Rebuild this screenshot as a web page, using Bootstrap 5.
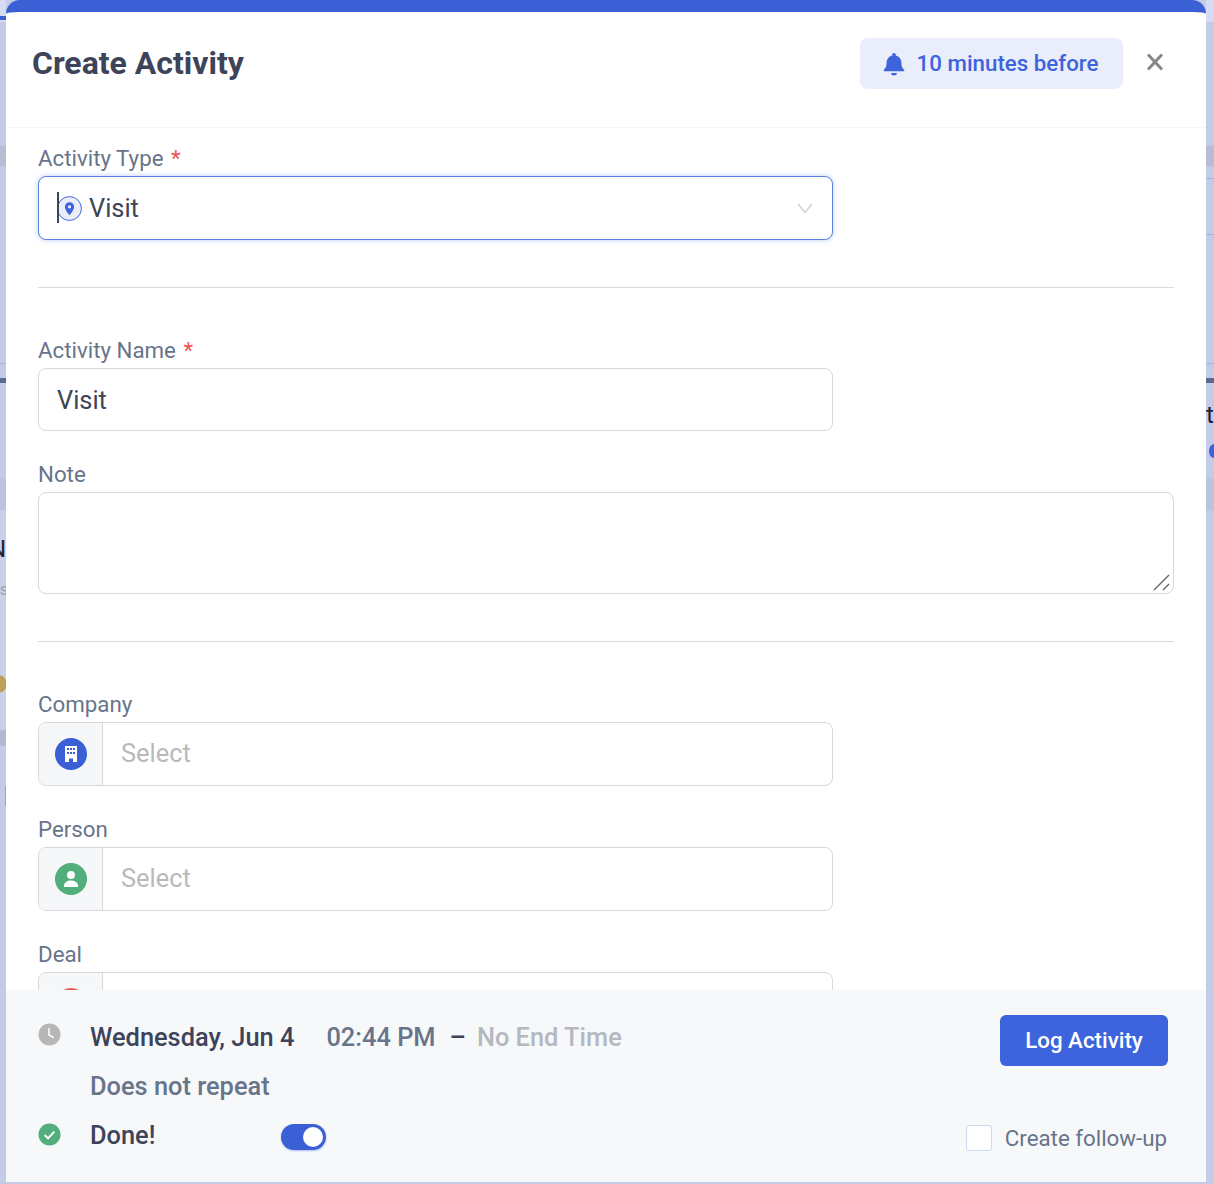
<!doctype html>
<html lang="en"><head><meta charset="utf-8"><title>Create Activity</title>
<link href="https://cdn.jsdelivr.net/npm/bootstrap@5.3.0/dist/css/bootstrap.min.css" rel="stylesheet">
<style>
html,body{height:1184px;overflow:hidden}
body{background:#c4cbe6;font-family:Roboto,sans-serif;color:#3d4459;position:relative}
.strip{position:absolute;left:0;width:6px}
.strip-r{left:1206px;width:8px}
.strip-head{top:0;height:22px;background:#d5dbf3}
.strip-rule{top:16px;height:4px;background:#3b60d6}
.strip-band{top:146px;height:20px;background:#b7bdd3}
.strip-line{top:363px;height:1px;background:#a9b3d3}
.strip-bar{top:378px;height:5px;background:#5d6b90}
.strip-shade{top:478px;height:32px;background:#bcc3dd}
.strip-pale{top:510px;height:220px;background:#c9d0e8}
.strip-low{top:730px;height:16px;background:#b3b9d0}
.strip-tick{top:786px;left:5px;width:1px;height:20px;background:#8fa3e2}
.strip-r1{top:178px;height:1px;background:#a9b3d3}
.strip-r2{top:234px;height:1px;background:#a9b3d3}
.strip-dot{position:absolute;left:-11px;top:675px;width:18px;height:18px;border-radius:50%;background:#bf9f58}
.strip-pin{position:absolute;left:1209px;top:444px;width:10px;height:14px;border-radius:50%;background:#3d63dd}
.strip-txt{position:absolute;font-size:24px;line-height:28px;color:#1d2333}
.strip-n{left:-11px;top:535px}
.strip-t{left:1206px;top:401px}
.strip-us{position:absolute;left:-9px;top:580px;font-size:16px;line-height:20px;color:#99a0b5}
.sheet{position:relative;margin-left:6px;width:1200px;height:1182px;background:#fff;border-top:12px solid #3b60d6;border-radius:14px 14px 0 0;display:flex;flex-direction:column;overflow:hidden}
.sheet-head{height:116px;flex:none;padding:26px 39px 0 26px;border-bottom:1px solid #f3f4f6}
.sheet-title{font-family:Roboto,sans-serif;font-weight:700;font-size:32px;line-height:50px;margin:0;color:#3d4459}
.remind{width:263px;height:51px;padding-right:2px;background:#e9eefa;border-radius:8px;color:#3d63dd;font-size:22.3px;font-weight:500;gap:12px}
.x-btn{width:24px;height:24px;margin:11px 0 0 20px;padding:0;background:none;border:0;color:#878787}
.sheet-body{flex:1;min-height:0;overflow:hidden;padding:16px 32px 0}
.lbl{font-size:22.3px;line-height:29px;color:#67748a;margin:0 0 3px;display:block}
.req{color:#ef5350;margin-left:2px}
.fld{width:795px;height:63px;border:1px solid #d6d8db;border-radius:8px;background:#fff;font-size:25.4px;color:#3d4459;padding:2px 18px 0}
.fld-on{height:64px;border-color:#5d7fe3;box-shadow:0 0 5px rgba(61,99,221,.35);position:relative;gap:7px;padding-top:0}
.caret-mark{position:absolute;left:18px;top:15px;width:2px;height:31px;background:#3d4459}
.note-box{height:102px;width:100%;border:1px solid #d6d8db;border-radius:8px;position:relative;margin-bottom:47px}
.grip{position:absolute;right:2px;bottom:2px}
.sep{border-top:1px solid #d9dbdf;margin:0;opacity:1}
.sep-gap{margin-bottom:48px}
.grp{width:795px;height:64px;border:1px solid #d6d8db;border-radius:8px;overflow:hidden;margin-bottom:29px}
.grp-ic{width:64px;flex:none;background:#f6f7f9;border-right:1px solid #d6d8db}
.grp-ph{font-size:25.4px;color:#b9b9b9;padding:0 0 2px 18px}
.sheet-foot{flex:none;height:192px;background:#f7f8fa;padding:25px 38px 0 32px;position:relative}
.foot-ic{width:23px;flex:none}
.clock-ic{margin:-6px 29px 0 0}
.date-main{font-size:25.4px;font-weight:500;color:#3d4459;line-height:44px}
.date-time{font-size:25.4px;font-weight:500;color:#67748a;margin-left:32px}
.date-dash{font-size:25.4px;font-weight:500;margin:0 11px 0 14px}
.date-none{font-size:25.4px;font-weight:500;color:#b4b8bf}
.repeat{font-size:25.4px;font-weight:500;color:#67748a;margin:2px 0 0 52px;line-height:36px}
.done-row{margin-top:14px}
.done{font-size:25.4px;font-weight:500;margin:-3px 0 0 29px;width:191px;color:#3d4459;line-height:36px}
.tog{width:45px;height:26px;border-radius:13px;background:#3b60d6;position:relative;box-shadow:0 1px 2px rgba(61,99,221,.4)}
.tog-dot{position:absolute;right:3px;top:3px;width:20px;height:20px;border-radius:50%;background:#fff}
.log-btn{width:168px;height:51px;background:#3d63dd;color:#fff;font-size:22.3px;font-weight:500;border:0;border-radius:6px;padding:0}
.chk-side{margin:2px 1px 0 0}
.chk{width:26px;height:26px;background:#fff;border:1px solid #ccd8f4;border-radius:3px}
.fu{font-size:22.3px;color:#67748a;margin-left:13px;padding-top:2px}
</style></head><body>
<div class="strip strip-head"></div><div class="strip strip-r strip-head"></div>
<div class="strip strip-rule"></div>
<div class="strip strip-band"></div><div class="strip strip-r strip-band"></div>
<div class="strip strip-r strip-r1"></div><div class="strip strip-r strip-r2"></div>
<div class="strip strip-line"></div><div class="strip strip-r strip-line"></div>
<div class="strip strip-bar"></div><div class="strip strip-r strip-bar"></div>
<div class="strip strip-shade"></div><div class="strip strip-r strip-shade"></div>
<div class="strip strip-pale"></div>
<div class="strip strip-low"></div>
<div class="strip strip-tick"></div>
<div class="strip-dot"></div><div class="strip-pin"></div>
<div class="strip-txt strip-n">N</div>
<div class="strip-txt strip-t">t</div>
<div class="strip-us">us</div>
<main class="sheet">
 <header class="sheet-head d-flex align-items-start justify-content-between">
  <h1 class="sheet-title">Create Activity</h1>
  <div class="d-flex align-items-start">
   <div class="remind d-flex align-items-center justify-content-center">
    <svg width="22" height="24" viewBox="0 0 22 24" fill="#3d63dd"><path d="M11 1a1.800 1.800 0 0 1 1.800 1.800v.6c3.600.8 5.600 3.800 5.600 7.400 0 3.600.9 5.200 2.800 7.200v1.200H.8V18c1.900-2 2.800-3.600 2.800-7.200 0-3.600 2-6.600 5.600-7.400v-.6A1.800 1.800 0 0 1 11 1zM8 21h6c0 1.300-1.300 2.400-3 2.400S8 22.300 8 21z"/></svg>
    <span>10 minutes before</span>
   </div>
   <button class="x-btn" type="button" aria-label="Close"><svg width="24" height="24" viewBox="0 0 24 24" fill="none" stroke="currentColor" stroke-width="3"><path d="M5 4.500 19 19.500M19 4.500 5 19.500"/></svg></button>
  </div>
 </header>
 <section class="sheet-body">
  <label class="lbl">Activity Type <span class="req">*</span></label>
  <div class="fld fld-on d-flex align-items-center" style="margin-bottom:47px">
   <i class="caret-mark"></i>
   <svg width="25" height="25" viewBox="0 0 26 26"><circle cx="13" cy="13" r="12.400" fill="#e9eefa" stroke="#3d63dd"/><path d="M13 6.500a4.800 4.800 0 0 0-4.800 4.800C8.200 15 13 20 13 20s4.800-5 4.800-8.700A4.800 4.800 0 0 0 13 6.500zm0 6.500a1.700 1.700 0 1 1 0-3.400 1.700 1.700 0 0 1 0 3.400z" fill="#3d63dd"/></svg>
   <span>Visit</span>
   <svg class="ms-auto" width="18" height="11" viewBox="0 0 18 11" fill="none" stroke="#cfcfcf" stroke-width="1.400"><path d="M2 1 9 9.500 16 1"/></svg>
  </div>
  <hr class="sep sep-gap">
  <label class="lbl">Activity Name <span class="req">*</span></label>
  <div class="fld d-flex align-items-center" style="margin-bottom:29px">Visit</div>
  <label class="lbl">Note</label>
  <div class="note-box"><svg class="grip" width="18" height="18" viewBox="0 0 18 18" stroke="#666" stroke-width="1.400"><path d="M1 17 16 2M10 17l6-6"/></svg></div>
  <hr class="sep sep-gap">
  <label class="lbl">Company</label>
  <div class="grp d-flex">
   <div class="grp-ic d-flex align-items-center justify-content-center"><svg width="32" height="32" viewBox="0 0 32 32"><circle cx="16" cy="16" r="16" fill="#3b60d6"/><path fill-rule="evenodd" fill="#fff" d="M10 8h12v16h-4v-3.500h-4V24h-4zM12 10v2h2v-2zm3 0v2h2v-2zm3 0v2h2v-2zM12 14v2h2v-2zm3 0v2h2v-2zm3 0v2h2v-2z"/></svg></div>
   <div class="grp-ph d-flex align-items-center">Select</div>
  </div>
  <label class="lbl">Person</label>
  <div class="grp d-flex">
   <div class="grp-ic d-flex align-items-center justify-content-center"><svg width="32" height="32" viewBox="0 0 32 32"><circle cx="16" cy="16" r="16" fill="#52ae7a"/><circle cx="16" cy="12" r="4" fill="#fff"/><path d="M9 24v-1.500c0-3 3.500-5 7-5s7 2 7 5V24z" fill="#fff"/></svg></div>
   <div class="grp-ph d-flex align-items-center">Select</div>
  </div>
  <label class="lbl">Deal</label>
  <div class="grp d-flex">
   <div class="grp-ic d-flex align-items-center justify-content-center"><svg width="32" height="32" viewBox="0 0 32 32"><circle cx="16" cy="16" r="16" fill="#e9605b"/></svg></div>
  </div>
 </section>
 <footer class="sheet-foot">
  <div class="d-flex align-items-start justify-content-between">
   <div class="d-flex align-items-center" style="height:44px">
    <svg class="foot-ic clock-ic" width="23" height="23" viewBox="0 0 24 24"><circle cx="12" cy="12" r="11.500" fill="#b7b7b7"/><path d="M11.500 5.500v7l5 3" fill="none" stroke="#f7f8fa" stroke-width="1.800"/></svg>
    <span class="date-main">Wednesday, Jun 4</span><span class="date-time">02:44 PM</span><span class="date-dash">–</span><span class="date-none">No End Time</span>
   </div>
   <button class="log-btn" type="button">Log Activity</button>
  </div>
  <div class="repeat">Does not repeat</div>
  <div class="d-flex align-items-center justify-content-between done-row">
   <div class="d-flex align-items-center">
    <svg class="foot-ic" style="margin-top:-5px" width="23" height="23" viewBox="0 0 24 24"><circle cx="12" cy="12" r="11.500" fill="#52ae7a"/><path d="M7 12.500l3.500 3.500L17 9" fill="none" stroke="#fff" stroke-width="2"/></svg>
    <span class="done">Done!</span>
    <span class="tog"><i class="tog-dot"></i></span>
   </div>
   <div class="d-flex align-items-center chk-side"><span class="chk"></span><span class="fu">Create follow-up</span></div>
  </div>
 </footer>
</main>
</body></html>
